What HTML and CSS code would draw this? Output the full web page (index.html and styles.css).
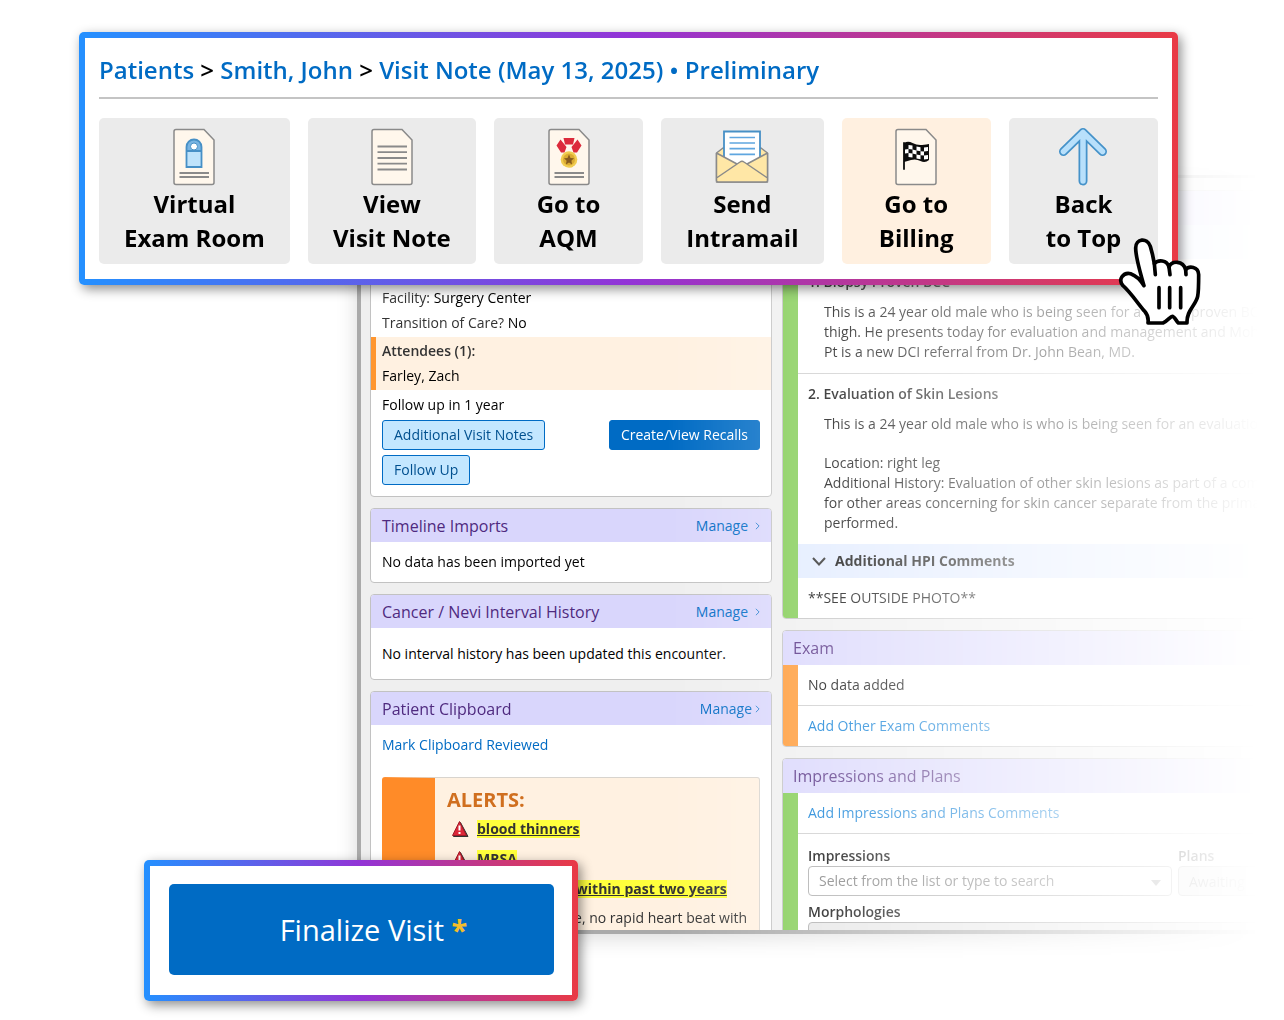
FILE: index.html
```html
<!DOCTYPE html>
<html lang="en">
<head>
<meta charset="utf-8">
<meta name="viewport" content="width=device-width, initial-scale=1">
<title>Visit Note</title>
<link rel="stylesheet" href="styles.css">
</head>
<body>
<main class="stage">

  <div class="preview">
    <div class="window">
      <div class="column">
        <section class="card visit">
          <p class="line"><span class="label">Facility:</span> Surgery Center</p>
          <p class="line"><span class="label">Transition of Care?</span> No</p>
          <div class="attendees">
            <p class="line label strong">Attendees (1):</p>
            <p class="line">Farley, Zach</p>
          </div>
          <p class="line">Follow up in 1 year</p>
          <div class="actions">
            <div class="stack">
              <button class="btn btn-light" type="button">Additional Visit Notes</button>
              <button class="btn btn-light" type="button">Follow Up</button>
            </div>
            <button class="btn btn-primary" type="button">Create/View Recalls</button>
          </div>
        </section>

        <section class="card">
          <header class="card-head">
            <h2>Timeline Imports</h2>
            <a class="manage" href="#">Manage <svg class="chev" viewBox="0 0 6 10"><path d="M1 1l4 4-4 4"/></svg></a>
          </header>
          <p class="card-text">No data has been imported yet</p>
        </section>

        <section class="card">
          <header class="card-head">
            <h2>Cancer / Nevi Interval History</h2>
            <a class="manage" href="#">Manage <svg class="chev" viewBox="0 0 6 10"><path d="M1 1l4 4-4 4"/></svg></a>
          </header>
          <p class="card-text roomy">No interval history has been updated this encounter.</p>
        </section>

        <section class="card clipboard">
          <header class="card-head">
            <h2>Patient Clipboard</h2>
            <a class="manage tight" href="#">Manage <svg class="chev" viewBox="0 0 6 10"><path d="M1 1l4 4-4 4"/></svg></a>
          </header>
          <p class="card-text"><a href="#">Mark Clipboard Reviewed</a></p>
          <div class="alerts">
            <h3>ALERTS:</h3>
            <ul>
              <li><svg class="warn" viewBox="0 0 18 18"><path class="warn-shadow" d="M9.500 2.500L17 16.500H2.500z"/><path class="warn-body" d="M8.500 1.500L15.500 15.500H1.500z"/><path class="warn-mark" d="M8.500 5.500v5M8.500 12v2"/></svg><mark>blood thinners</mark></li>
              <li><svg class="warn" viewBox="0 0 18 18"><path class="warn-shadow" d="M9.500 2.500L17 16.500H2.500z"/><path class="warn-body" d="M8.500 1.500L15.500 15.500H1.500z"/><path class="warn-mark" d="M8.500 5.500v5M8.500 12v2"/></svg><mark>MRSA</mark></li>
              <li><svg class="warn" viewBox="0 0 18 18"><path class="warn-shadow" d="M9.500 2.500L17 16.500H2.500z"/><path class="warn-body" d="M8.500 1.500L15.500 15.500H1.500z"/><path class="warn-mark" d="M8.500 5.500v5M8.500 12v2"/></svg><mark>artificial joint within past two years</mark></li>
            </ul>
            <p>e, no rapid heart beat with</p>
          </div>
        </section>
      </div>

      <div class="column">
        <section class="card hpi">
          <header class="card-head tall"></header>
          <div class="body green">
            <div class="strip"></div>
            <article class="problem">
              <h3>1. Biopsy Proven BCC</h3>
              <p>This is a 24 year old male who is being seen for a biopsy proven BCC<br>thigh. He presents today for evaluation and management and Mohs<br>Pt is a new DCI referral from Dr. John Bean, MD.</p>
            </article>
            <article class="problem second">
              <h3>2. Evaluation of Skin Lesions</h3>
              <p>This is a 24 year old male who is who is being seen for an evaluation</p>
              <p>Location: right leg<br>Additional History: Evaluation of other skin lesions as part of a comp<br>for other areas concerning for skin cancer separate from the primary<br>performed.</p>
            </article>
            <h3 class="strip comments"><svg class="down" viewBox="0 0 14 9"><path d="M1 1l6 6.500 6-6.500"/></svg>Additional HPI Comments</h3>
            <p class="row">**SEE OUTSIDE PHOTO**</p>
          </div>
        </section>

        <section class="card">
          <header class="card-head tall"><h2>Exam</h2></header>
          <div class="body orange">
            <p class="row">No data added</p>
            <p class="row divided"><a class="soft" href="#">Add Other Exam Comments</a></p>
          </div>
        </section>

        <section class="card">
          <header class="card-head tall"><h2>Impressions and Plans</h2></header>
          <div class="body green">
            <p class="row"><a class="soft" href="#">Add Impressions and Plans Comments</a></p>
            <div class="fields">
              <div class="field">
                <label for="impressions">Impressions</label>
                <div class="select">
                  <select id="impressions"><option>Select from the list or type to search</option></select>
                  <svg class="caret" viewBox="0 0 10 6"><path d="M0 0h10L5 6z"/></svg>
                </div>
              </div>
              <div class="field plans">
                <label for="plans">Plans</label>
                <input id="plans" type="text" value="Awaiting M" readonly>
              </div>
              <div class="field wide">
                <label for="morphologies">Morphologies</label>
                <input id="morphologies" type="text" readonly>
              </div>
            </div>
          </div>
        </section>
      </div>
    </div>
  </div>

  <section class="callout toolbar">
    <nav class="crumbs"><a href="#">Patients</a> &gt; <a href="#">Smith, John</a> &gt; <a href="#">Visit Note (May 13, 2025) • Preliminary</a></nav>
    <div class="tools">
      <button class="tool" type="button">
        <svg viewBox="0 0 64 64"><path class="sheet" d="M14 6.500H42L52 17V59.500Q52 61.500 50 61.500H14Q12 61.500 12 59.500V8.500Q12 6.500 14 6.500z"/><path d="M24.500 44V24a7.500 7.500 0 0 1 15 0V44z" fill="#bfe3fb"/><path d="M24.500 28V24a7.500 7.500 0 0 1 15 0V28z" fill="#78b4e2"/><path d="M24.500 44V24a7.500 7.500 0 0 1 15 0V44zM24.500 28h15" fill="none" stroke="#4790c6" stroke-width="1.800"/><circle cx="32" cy="23.500" r="3.500" fill="#fff" stroke="#4790c6" stroke-width="1"/><path class="rule" d="M17.500 50h29.500M17.500 54h29.500"/></svg>
        <span>Virtual<br>Exam Room</span>
      </button>
      <button class="tool" type="button">
        <svg viewBox="0 0 64 64"><path class="sheet" d="M14 6.500H42L52 17V59.500Q52 61.500 50 61.500H14Q12 61.500 12 59.500V8.500Q12 6.500 14 6.500z"/><path class="rule" d="M17.500 23.500h29.500M17.500 29.200h29.500M17.500 35h29.500M17.500 40.700h29.500M17.500 46.500h29.500"/></svg>
        <span>View<br>Visit Note</span>
      </button>
      <button class="tool" type="button">
        <svg viewBox="0 0 64 64"><path class="sheet" d="M14 6.500H42L52 17V59.500Q52 61.500 50 61.500H14Q12 61.500 12 59.500V8.500Q12 6.500 14 6.500z"/><path d="M26.500 15H37.500L36 21.500H28zM23.500 16.500L29.500 24 27.500 29.500H24L19.500 22.500zM40.500 16.500L34.500 24 36.500 29.500H40L44.500 22.500z" fill="#dc2b3c"/><circle cx="32" cy="36.500" r="8.300" fill="#f0cc50"/><circle cx="32" cy="36.500" r="6" fill="#dbab32"/><path d="M32 31.500l1.500 3.400 3.500.4-2.600 2.500.7 3.600-3.100-1.800-3.100 1.800.7-3.600-2.600-2.500 3.500-.4z" fill="#865a1d"/><path class="rule" d="M17.500 50h29.500M17.500 54h29.500"/></svg>
        <span>Go to<br>AQM</span>
      </button>
      <button class="tool" type="button">
        <svg viewBox="0 0 64 64"><path d="M6.500 30L13 25H51L57.500 30V59H6.500z" fill="#ffe7a6" stroke="#8a8a8a" stroke-width="1.500" stroke-linejoin="round"/><path d="M14 8.500H50V34L36 41 32 38 28 41 14 34z" fill="#fff"/><path d="M14 34V8.500H50V34" fill="none" stroke="#4790c6" stroke-width="1.800"/><path d="M19.500 14.500h25.500M19.500 20h25.500M19.500 25.700h25.500M19.500 31.300h25.500" stroke="#5fa6e0" stroke-width="1.700"/><path d="M6.500 30L27 41 6.500 55zM57.500 30L37 41 57.500 55z" fill="#ffe7a6"/><path d="M6.500 55L32 37.500 57.500 55V59H6.500z" fill="#ffe7a6"/><path d="M6.500 30L27 41M57.500 30L37 41M6.500 55L30 39Q32 37.500 34 39L57.500 55M6.500 30V57.500Q6.500 59 8 59H56Q57.500 59 57.500 57.500V30" fill="none" stroke="#8a8a8a" stroke-width="1.500"/></svg>
        <span>Send<br>Intramail</span>
      </button>
      <button class="tool active" type="button">
        <svg viewBox="0 0 64 64"><path class="sheet" d="M14 6.500H42L52 17V59.500Q52 61.500 50 61.500H14Q12 61.500 12 59.500V8.500Q12 6.500 14 6.500z"/><path d="M20 20Q24 17.500 28.500 20T38 22 45 21V37Q41 40.500 36.500 38T27 37 20 39z" fill="#0c0c0c"/><path d="M24.500 22l4 .5v4l-4-.5zM32.500 23.500l4 .8v4l-4-.8zM40 24.500l4-.5v4l-4 .5zM21 26.500l3.500-.5v4l-3.500.5zM28.500 26.500l4 1v4l-4-1zM36.500 28.300l3.500.2v4l-3.500-.2zM24.500 30l4 .5v4l-4-.5zM32.500 31.500l4 .8v4l-4-.8zM40 32.500l4-.5v4l-4 .5z" fill="#fff"/><path d="M20 20V46" stroke="#0c0c0c" stroke-width="1.800" stroke-linecap="round"/></svg>
        <span>Go to<br>Billing</span>
      </button>
      <button class="tool" type="button">
        <svg viewBox="0 0 64 64"><g fill="none" stroke-linecap="round" stroke-linejoin="round"><path d="M32 58V9.500M12.500 28.500L32 9.500 51.500 28.500" stroke="#4592c9" stroke-width="9"/><path d="M32 58V9.500M12.500 28.500L32 9.500 51.500 28.500" stroke="#b8e0fb" stroke-width="5.500"/></g></svg>
        <span>Back<br>to Top</span>
      </button>
    </div>
    <svg class="pointer" viewBox="865 652 252 270" aria-hidden="true">
      <path fill="#fff" d="M943 798C935 770 918 715 918 685C918 657 952 652 962 680C967 696 971 715 974 732C985 719 1012 720 1018 742C1026 722 1060 722 1068 750C1078 738 1106 740 1107 765C1107 790 1107 815 1104 830C1098 858 1070 872 1072 910H1046C1040 904 1034 890 1028 890C1022 890 1014 904 1000 910H955C957 895 954 885 945 875C930 858 900 815 880 798C864 780 880 757 903 762C920 768 935 785 943 798z"/>
      <path d="M974 732L977 765M1018 742L1021 765M1068 750L1069 765M988 804V864M1020 804V864M1053 804V864"/>
    </svg>
  </section>

  <section class="callout finalize">
    <button type="button">Finalize Visit <span>*</span></button>
  </section>

</main>
</body>
</html>
```
FILE: styles.css
```css
* {
  box-sizing: border-box;
}

body {
  margin: 0;
  background: #fff;
  color: #000;
  font: 14px/20px "Open Sans", "Noto Sans", sans-serif;
}

h2,
h3,
p,
ul {
  margin: 0;
  padding: 0;
  font: inherit;
}

a {
  color: #006bc4;
  text-decoration: none;
}

button,
input,
select {
  font: inherit;
}

.stage {
  position: relative;
  display: flex;
  height: 100vh;
  min-height: 800px;
  overflow: hidden;
}

/* Application window, fading out toward the right edge */
.preview {
  flex: 1;
  display: flex;
  min-width: 0;
  padding: 175px 24px 86px 357px;
  -webkit-mask-image: linear-gradient(to right, #000 52%, transparent 98%);
  mask-image: linear-gradient(to right, #000 52%, transparent 98%);
}

.window {
  flex: 1;
  min-width: 0;
  display: grid;
  grid-template-columns: 402px minmax(0, 1fr);
  align-items: start;
  gap: 10px;
  padding: 12px 0 0 9px;
  overflow: hidden;
  background: #efefef;
  border: 4px solid #aaa;
  border-top-width: 3px;
  border-right: 0;
  box-shadow: 0 4px 20px rgba(0, 0, 0, 0.15);
}

.column {
  display: flex;
  flex-direction: column;
  gap: 11px;
}

.card {
  overflow: hidden;
  background: #fff;
  border: 1px solid #c2c2c2;
  border-radius: 4px;
}

.card-head {
  display: flex;
  align-items: center;
  justify-content: space-between;
  height: 33px;
  padding: 0 11px;
  background: #d9d6fc;
  color: #4f2a7f;
}

.card-head.tall {
  height: 34px;
  padding: 0 10px;
}

.card-head h2 {
  font-size: 16px;
}

.manage {
  display: flex;
  align-items: center;
  gap: 7px;
}

.manage.tight {
  gap: 3px;
}

.chev {
  width: 5px;
  height: 8px;
  fill: none;
  stroke: currentColor;
}

.card-text {
  padding: 10px 11px;
}

.card-text.roomy {
  padding: 16px 11px 15px;
}

.visit {
  padding: 94px 0 11px;
}

.line {
  padding: 0 11px;
  line-height: 25px;
}

.label {
  color: #333;
  font-weight: 500;
}

.label.strong {
  font-weight: 600;
}

.attendees {
  margin: 2px 0;
  padding: 1px 0 2px;
  background: #fff1e1;
  box-shadow: inset 5px 0 #ff962f;
}

.actions {
  display: flex;
  align-items: flex-start;
  justify-content: space-between;
  padding: 3px 11px 0;
}

.stack {
  display: flex;
  flex-direction: column;
  align-items: flex-start;
  gap: 5px;
}

.btn {
  height: 30px;
  padding: 0 11px;
  border: 1px solid #006bc4;
  border-radius: 3px;
}

.btn-light {
  background: #c4e7ff;
  color: #00508f;
}

.btn-primary {
  background: #006bc4;
  color: #fff;
  font-weight: 500;
}

.alerts {
  min-height: 240px;
  margin: 12px 11px 0;
  padding: 8px 12px 0;
  background: #fff1e1;
  border: 1px solid #d8d4ce;
  border-left: 53px solid #ff8b28;
  border-radius: 3px;
  color: #333;
  white-space: nowrap;
}

.alerts h3 {
  color: #d06f1f;
  font-size: 20px;
  font-weight: 700;
  line-height: 28px;
}

.alerts ul {
  list-style: none;
}

.alerts li {
  display: flex;
  align-items: center;
  gap: 8px;
  height: 30px;
  padding-left: 4px;
}

.alerts p {
  line-height: 28px;
  text-align: right;
}

mark {
  background: #ffff3c;
  color: #333;
  font-weight: 700;
  line-height: 18px;
  text-decoration: underline;
}

.warn {
  width: 18px;
  height: 18px;
  stroke-linejoin: round;
}

.warn-shadow {
  fill: #333;
  stroke: #333;
}

.warn-body {
  fill: #dc2638;
  stroke: #9c1c28;
}

.warn-mark {
  stroke: #fff;
  stroke-width: 2;
}

/* Note sections */
.body {
  white-space: nowrap;
}

.green {
  border-left: 15px solid #7fcb50;
}

.orange {
  border-left: 15px solid #ff9730;
}

.strip {
  height: 34px;
  background: #e1ebff;
}

.comments {
  display: flex;
  align-items: center;
  gap: 9px;
  padding: 0 14px;
  font-weight: 700;
}

.down {
  width: 14px;
  height: 9px;
  fill: none;
  stroke: #222;
  stroke-width: 2;
}

.problem {
  padding: 13px 10px 11px;
}

.problem h3 {
  margin-bottom: 10px;
  font-weight: 600;
}

.problem p {
  padding-left: 16px;
}

.problem p + p {
  margin-top: 19px;
}

.problem.second {
  border-top: 1px solid #ccc;
  padding-top: 10px;
}

.row {
  padding: 10px;
}

.row.divided {
  border-top: 1px solid #ccc;
}

.soft {
  color: #0078d4;
}

.fields {
  display: grid;
  grid-template-columns: 364px minmax(0, 1fr);
  gap: 6px;
  padding: 12px 0 11px 10px;
  border-top: 1px solid #ccc;
}

.field {
  display: flex;
  flex-direction: column;
}

.field.wide {
  grid-column: 1 / -1;
}

.field label {
  font-weight: 600;
}

.select {
  position: relative;
  display: flex;
}

.field select,
.field input {
  width: 100%;
  height: 30px;
  padding: 0 10px;
  border: 1px solid #aaa;
  border-radius: 4px;
  background: #fff;
  color: #777;
}

.field select {
  appearance: none;
}

.field input {
  background: #e6e6e6;
}

.caret {
  position: absolute;
  top: 14px;
  right: 11px;
  width: 10px;
  height: 6px;
  fill: #888;
}

/* Magnified callouts over the window */
.callout {
  position: absolute;
  border: 6px solid transparent;
  border-radius: 5px;
  background:
    linear-gradient(#fff, #fff) padding-box,
    linear-gradient(to right, #2490ff, #9334d6 50%, #e93a45) border-box;
  box-shadow: 3px 4px 12px rgba(0, 0, 0, 0.45);
}

.toolbar {
  top: 32px;
  right: 106px;
  left: 79px;
  padding: 15px 14px;
}

.crumbs {
  margin-bottom: 19px;
  padding-bottom: 10px;
  border-bottom: 2px solid #c4c4c4;
  font-size: 24px;
  font-weight: 600;
  line-height: 34px;
}

.tools {
  display: flex;
  justify-content: space-between;
}

.tool {
  display: flex;
  flex-direction: column;
  align-items: center;
  min-width: 149px;
  padding: 5px 25px 9px;
  border: 0;
  border-radius: 5px;
  background: #ebebeb;
  color: #000;
  font-size: 24px;
  font-weight: 700;
  line-height: 34px;
}

.tool.active {
  background: #fff0e0;
}

.tool svg {
  width: 64px;
  height: 64px;
}

.sheet {
  fill: #fff7ec;
  stroke: #8a8a8a;
  stroke-width: 1.5px;
}

.rule {
  stroke: #8a8a8a;
  stroke-width: 1.8px;
}

.pointer {
  position: absolute;
  right: -30px;
  bottom: -48px;
  width: 84px;
  height: 90px;
  fill: none;
  stroke: #000;
  stroke-width: 11px;
  stroke-linecap: round;
  stroke-linejoin: round;
}

.finalize {
  bottom: 19px;
  left: 144px;
  padding: 18px 18px 20px 19px;
}

.finalize button {
  width: 385px;
  height: 91px;
  padding: 0 0 0 24px;
  border: 0;
  border-radius: 5px;
  background: #006bc4;
  color: #fff;
  font-size: 29px;
}

.finalize span {
  color: #f2bd2c;
  font-weight: 700;
}
```
